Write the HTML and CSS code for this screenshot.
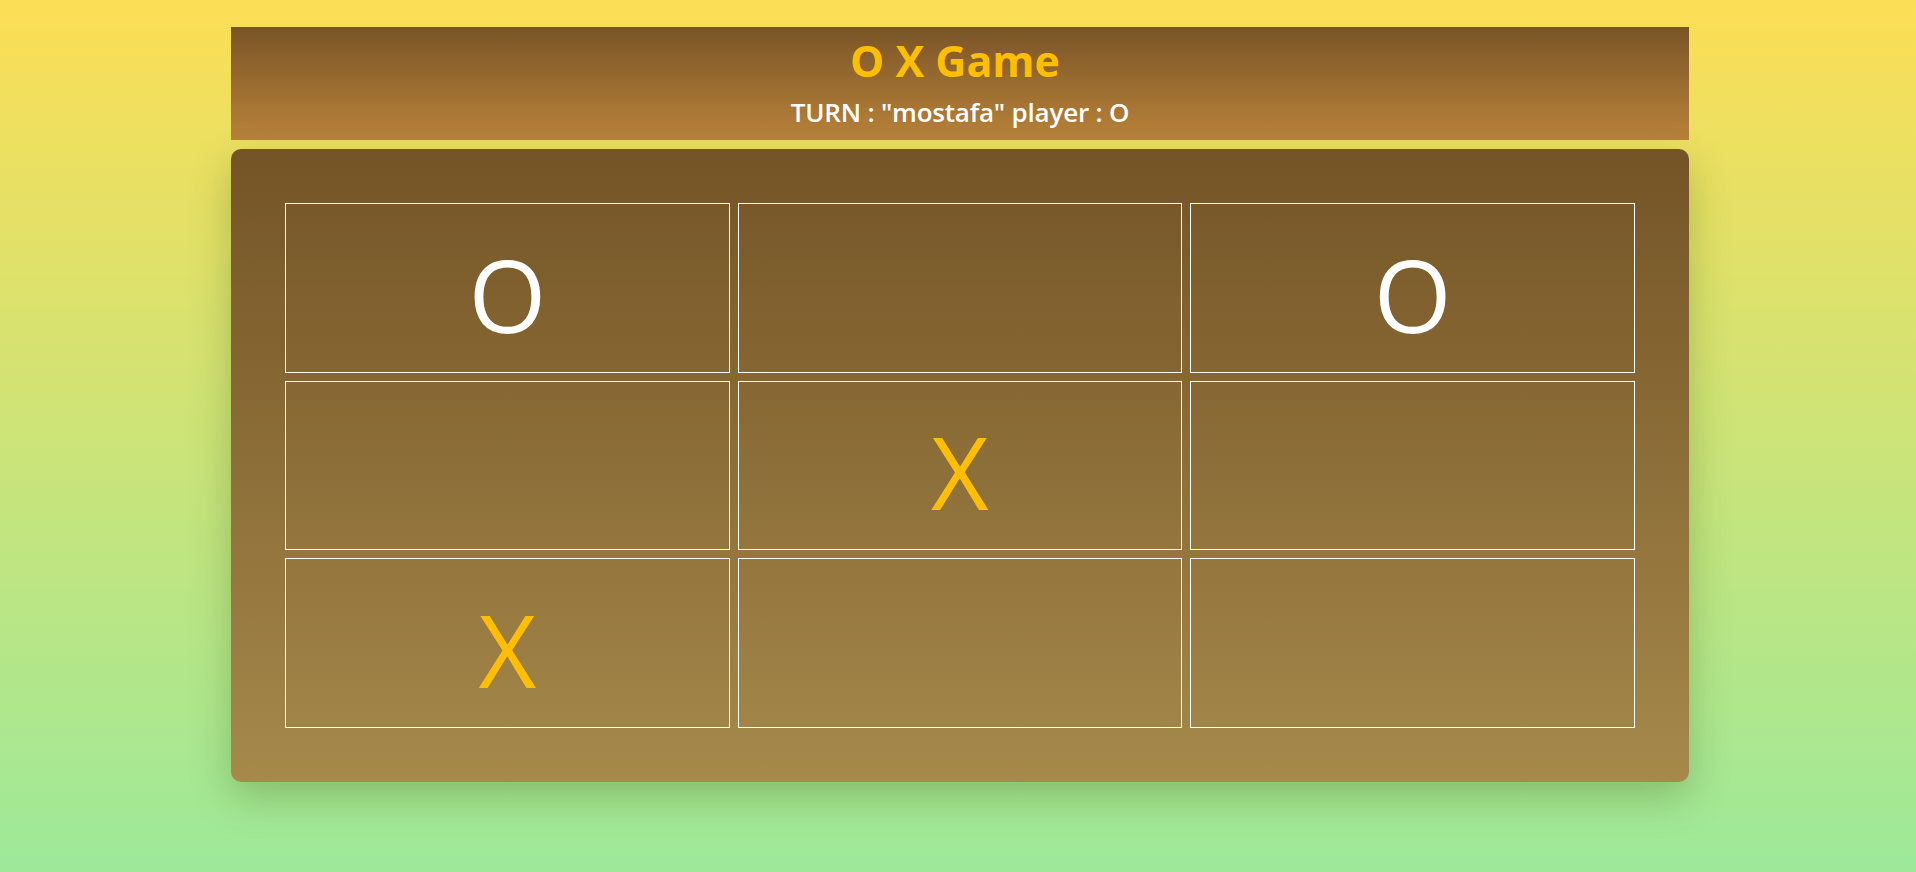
FILE: index.html
```html
<!DOCTYPE html>
<html lang="en">
<head>
<meta charset="utf-8">
<title>O X Game</title>
<link rel="stylesheet" href="styles.css">
</head>
<body>
<div class="game">
  <header class="game-header">
    <h1 class="game-title">O X Game</h1>
    <p class="game-turn">TURN : "mostafa" player : O</p>
  </header>
  <main class="board">
    <div class="cell cell-o">O</div>
    <div class="cell"></div>
    <div class="cell cell-o">O</div>
    <div class="cell"></div>
    <div class="cell cell-x">X</div>
    <div class="cell"></div>
    <div class="cell cell-x">X</div>
    <div class="cell"></div>
    <div class="cell"></div>
  </main>
</div>
</body>
</html>
```
FILE: styles.css
```css
* {
  box-sizing: border-box;
}

html, body {
  height: 100%;
}

body {
  margin: 0;
  padding: 27px 0 0 4px;
  font-family: "Open Sans", "Noto Sans", sans-serif;
  background: linear-gradient(to bottom, #fcde55 0%, #9de99a 100%);
  overflow: hidden;
}

.game {
  width: 1458px;
  margin: 0 auto;
  display: flex;
  flex-direction: column;
  gap: 9px;
}

.game-header {
  height: 113px;
  background: linear-gradient(to bottom, #7a5427 0%, #b9833a 100%);
  display: flex;
  flex-direction: column;
  align-items: center;
  padding-top: 7px;
}

.game-title {
  margin: 0;
  padding-right: 10px;
  font-size: 43px;
  font-weight: 700;
  line-height: 54px;
  color: #ffbf00;
}

.game-turn {
  margin: 7px 0 0;
  font-size: 26px;
  font-weight: 600;
  line-height: 34px;
  color: #ffffff;
  letter-spacing: -0.2px;
}

.board {
  height: 633px;
  padding: 54px;
  border-radius: 10px;
  background: linear-gradient(to bottom, #745426 0%, #a6894b 100%);
  box-shadow: 0 15px 40px rgba(60, 90, 20, 0.3);
  display: grid;
  grid-template-columns: repeat(3, 1fr);
  grid-template-rows: repeat(3, 1fr);
  gap: 8px;
}

.cell {
  border: 1px solid #ffffff;
  display: flex;
  align-items: center;
  justify-content: center;
  font-size: 100px;
  font-weight: 400;
  line-height: 1;
  padding-top: 12px;
}

.cell-o {
  color: #ffffff;
}

.cell-x {
  color: #ffbf00;
}
```
